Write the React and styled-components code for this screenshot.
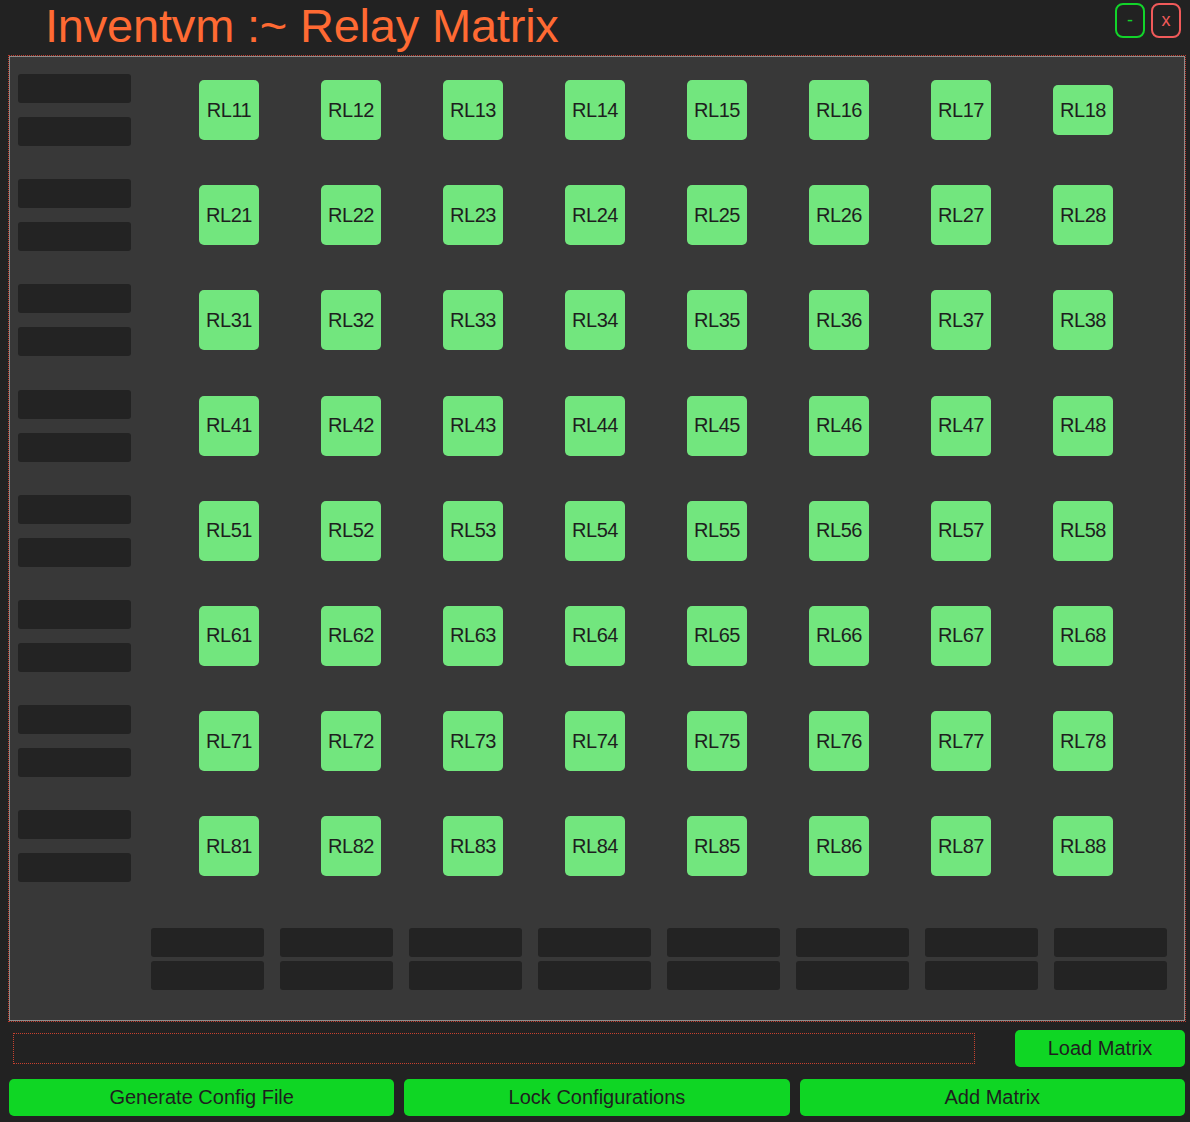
import React from "react";
import styled, { createGlobalStyle } from "styled-components";

const ROWS = [1, 2, 3, 4, 5, 6, 7, 8];
const COLS = [1, 2, 3, 4, 5, 6, 7, 8];

function App() {
  return (
    <>
      <GlobalStyle />
      <Window>
        <Header>
          <Title>Inventvm :~ Relay Matrix</Title>
          <WindowControls>
            <ControlButton color="#12d42a">-</ControlButton>
            <ControlButton color="#f05a5a">x</ControlButton>
          </WindowControls>
        </Header>

        <Panel>
          <MatrixRows>
            {ROWS.map((r) => (
              <MatrixRow key={r}>
                <LabelPair>
                  <Slot />
                  <Slot />
                </LabelPair>
                <Relays>
                  {COLS.map((c) => (
                    <Relay key={c} short={r === 1 && c === 8}>
                      RL{r}
                      {c}
                    </Relay>
                  ))}
                </Relays>
              </MatrixRow>
            ))}
          </MatrixRows>
          <ColumnLabels>
            {COLS.map((c) => (
              <LabelStack key={c}>
                <Slot />
                <Slot />
              </LabelStack>
            ))}
          </ColumnLabels>
        </Panel>

        <LoadRow>
          <PathField />
          <LoadButton>Load Matrix</LoadButton>
        </LoadRow>

        <ActionRow>
          <ActionButton>Generate Config File</ActionButton>
          <ActionButton>Lock Configurations</ActionButton>
          <ActionButton>Add Matrix</ActionButton>
        </ActionRow>
      </Window>
    </>
  );
}

// Styles
const GlobalStyle = createGlobalStyle`
  html, body {
    margin: 0;
    padding: 0;
    background: #222222;
  }
  body {
    font-family: "Liberation Sans", Arial, sans-serif;
  }
`;

const Window = styled.div`
  width: 1190px;
  height: 1122px;
  background: #222222;
  overflow: hidden;
`;

const Header = styled.div`
  height: 56px;
  display: flex;
  justify-content: space-between;
  align-items: flex-start;
`;

const Title = styled.h1`
  margin: 0;
  padding: 2px 0 0 45px;
  font-size: 47px;
  line-height: 48px;
  letter-spacing: -0.2px;
  font-weight: normal;
  color: #ff6a33;
`;

const WindowControls = styled.div`
  display: flex;
  gap: 6px;
  padding: 3px 9px 0 0;
`;

const ControlButton = styled.div`
  box-sizing: border-box;
  width: 30px;
  height: 35px;
  border: 2px solid ${(p) => p.color};
  border-radius: 8px;
  color: ${(p) => p.color};
  font-size: 18px;
  display: flex;
  align-items: center;
  justify-content: center;
`;

const Panel = styled.div`
  box-sizing: border-box;
  margin-left: 9px;
  width: 1176px;
  height: 965px;
  background: #383838;
  border: 1px solid #8c8c8c;
  outline: 1px dotted #c0392b;
  padding: 17px 0 0 8px;
`;

const MatrixRows = styled.div`
  display: flex;
  flex-direction: column;
  gap: 33.2px;
`;

const MatrixRow = styled.div`
  display: flex;
  align-items: center;
`;

const LabelPair = styled.div`
  display: flex;
  flex-direction: column;
  gap: 14px;
`;

const Slot = styled.div`
  width: 113px;
  height: 29px;
  background: #232323;
  border-radius: 3px;
`;

const Relays = styled.div`
  display: flex;
  align-items: center;
  gap: 62px;
  margin-left: 68px;
`;

const Relay = styled.div`
  width: 60px;
  height: ${(p) => (p.short ? "50px" : "60px")};
  background: #72e67e;
  border-radius: 5px;
  color: #1e1e1e;
  font-size: 20px;
  letter-spacing: -0.5px;
  display: flex;
  align-items: center;
  justify-content: center;
`;

const ColumnLabels = styled.div`
  display: flex;
  gap: 16px;
  margin: 46px 0 0 133px;
`;

const LabelStack = styled.div`
  display: flex;
  flex-direction: column;
  gap: 4px;
`;

const LoadRow = styled.div`
  display: flex;
  align-items: center;
  justify-content: space-between;
  margin: 9px 5px 0 13px;
`;

const PathField = styled.div`
  box-sizing: border-box;
  width: 962px;
  height: 31px;
  border: 1px dotted #c8412f;
`;

const GreenButton = styled.div`
  height: 37px;
  background: #0fd624;
  border-radius: 5px;
  color: #1e1e1e;
  font-size: 20px;
  display: flex;
  align-items: center;
  justify-content: center;
`;

const LoadButton = styled(GreenButton)`
  width: 170px;
`;

const ActionRow = styled.div`
  display: grid;
  grid-template-columns: repeat(3, 1fr);
  gap: 10px;
  margin: 12px 5px 0 9px;
`;

const ActionButton = styled(GreenButton)``;

export default App;
